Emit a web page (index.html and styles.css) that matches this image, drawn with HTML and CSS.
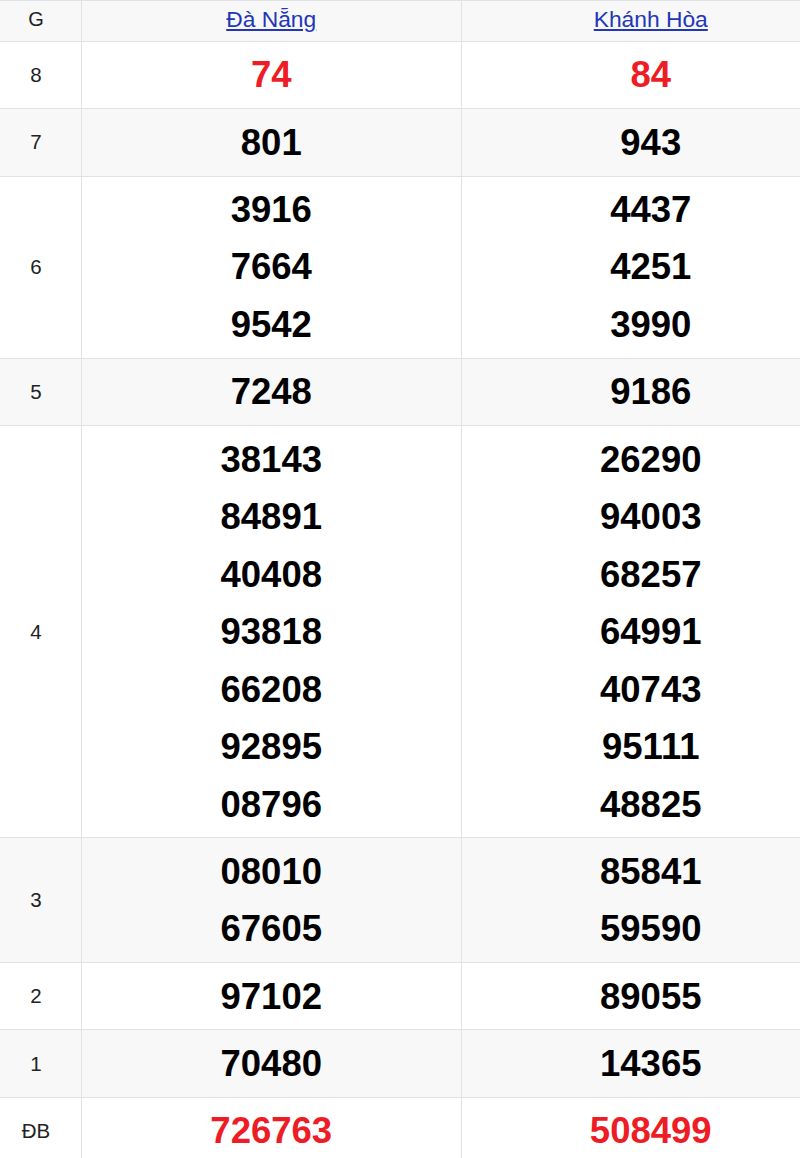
FILE: index.html
```html
<!DOCTYPE html>
<html lang="vi">
<head>
<meta charset="utf-8">
<title>Kết quả xổ số</title>
<link rel="stylesheet" href="styles.css">
</head>
<body>
<div class="wrap">
<table class="kq">
  <colgroup>
    <col class="c-g">
    <col class="c-p">
    <col class="c-p">
  </colgroup>
  <thead>
    <tr>
      <th class="g">G</th>
      <th><a href="#">Đà Nẵng</a></th>
      <th><a href="#">Khánh Hòa</a></th>
    </tr>
  </thead>
  <tbody>
    <tr>
      <td class="g">8</td>
      <td><div class="n red">74</div></td>
      <td><div class="n red">84</div></td>
    </tr>
    <tr>
      <td class="g">7</td>
      <td><div class="n">801</div></td>
      <td><div class="n">943</div></td>
    </tr>
    <tr>
      <td class="g">6</td>
      <td><div class="n">3916</div><div class="n">7664</div><div class="n">9542</div></td>
      <td><div class="n">4437</div><div class="n">4251</div><div class="n">3990</div></td>
    </tr>
    <tr>
      <td class="g">5</td>
      <td><div class="n">7248</div></td>
      <td><div class="n">9186</div></td>
    </tr>
    <tr>
      <td class="g">4</td>
      <td><div class="n">38143</div><div class="n">84891</div><div class="n">40408</div><div class="n">93818</div><div class="n">66208</div><div class="n">92895</div><div class="n">08796</div></td>
      <td><div class="n">26290</div><div class="n">94003</div><div class="n">68257</div><div class="n">64991</div><div class="n">40743</div><div class="n">95111</div><div class="n">48825</div></td>
    </tr>
    <tr>
      <td class="g">3</td>
      <td><div class="n">08010</div><div class="n">67605</div></td>
      <td><div class="n">85841</div><div class="n">59590</div></td>
    </tr>
    <tr>
      <td class="g">2</td>
      <td><div class="n">97102</div></td>
      <td><div class="n">89055</div></td>
    </tr>
    <tr>
      <td class="g">1</td>
      <td><div class="n">70480</div></td>
      <td><div class="n">14365</div></td>
    </tr>
    <tr>
      <td class="g">ĐB</td>
      <td><div class="n red">726763</div></td>
      <td><div class="n red">508499</div></td>
    </tr>
  </tbody>
</table>
</div>
</body>
</html>
```

FILE: styles.css
```css
html, body {
  margin: 0;
  padding: 0;
  background: #ffffff;
}

body {
  font-family: "Liberation Sans", Arial, sans-serif;
  overflow: hidden;
}

.wrap {
  width: 800px;
  overflow: hidden;
}

.kq {
  width: 850px;
  margin-left: -10px;
  border-collapse: collapse;
  table-layout: fixed;
}

.c-g {
  width: 91px;
}

.c-p {
  width: 379.5px;
}

.kq th,
.kq td {
  border: 1px solid #e1e2e8;
  text-align: center;
  vertical-align: middle;
  padding: 0;
}

.kq th {
  height: 37px;
  padding-bottom: 3px;
  font-weight: normal;
  font-size: 22.8px;
  background: #f8f8f8;
}

.kq th a {
  color: #2236b8;
  text-decoration: underline;
}

.kq th.g {
  font-size: 20px;
  color: #222;
}

.kq td {
  padding: 4.4px 8px;
}

.kq td.g {
  font-size: 20.5px;
  color: #222;
}

.kq tbody tr:nth-child(even) td {
  background: #f8f8f8;
}

.n {
  font-size: 36.5px;
  font-weight: bold;
  line-height: 57.5px;
  color: #000;
}

.n.red {
  color: #ee1c25;
}
```
